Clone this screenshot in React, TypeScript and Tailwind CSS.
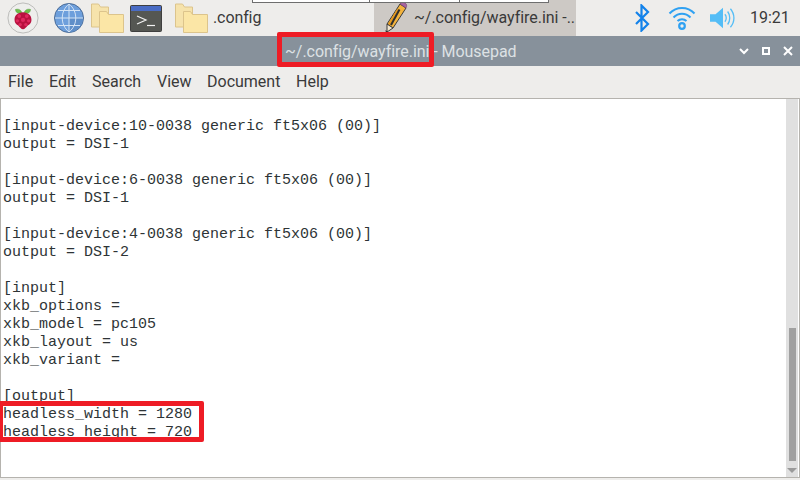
const lines = [
  "",
  "[input-device:10-0038 generic ft5x06 (00)]",
  "output = DSI-1",
  "",
  "[input-device:6-0038 generic ft5x06 (00)]",
  "output = DSI-1",
  "",
  "[input-device:4-0038 generic ft5x06 (00)]",
  "output = DSI-2",
  "",
  "[input]",
  "xkb_options =",
  "xkb_model = pc105",
  "xkb_layout = us",
  "xkb_variant =",
  "",
  "[output]",
  "headless_width = 1280",
  "headless_height = 720",
];

const menus = [
  { label: "File", width: "w-[41px]" },
  { label: "Edit", width: "w-[43px]" },
  { label: "Search", width: "w-[65px]" },
  { label: "View", width: "w-[50px]" },
  { label: "Document", width: "w-[89px]" },
  { label: "Help", width: "w-[40px]" },
];

const RaspberryIcon = () => (
  <svg width="32" height="32" viewBox="0 0 34 34">
    <circle cx="17" cy="17" r="16" fill="#eeeeec" stroke="#b9b9b6" />
    <path d="M16 12c-1-4-4-5-7-4 0 3 3 5 7 4zM18 12c1-4 4-5 7-4 0 3-3 5-7 4z" fill="#6cc04a" stroke="#4c8f33" strokeWidth="0.5" />
    <path d="M17 11c5 0 9 3 9 8 0 3-2 5-4 6-2 2-3 4-5 4s-3-2-5-4c-2-1-4-3-4-6 0-5 4-8 9-8z" fill="#b8123f" />
    <g fill="#e0295f">
      <circle cx="13" cy="15" r="2" />
      <circle cx="21" cy="15" r="2" />
      <circle cx="17" cy="19" r="2.2" />
      <circle cx="11" cy="20" r="1.8" />
      <circle cx="23" cy="20" r="1.8" />
      <circle cx="14" cy="24" r="1.8" />
      <circle cx="20" cy="24" r="1.8" />
    </g>
  </svg>
);

const GlobeIcon = () => (
  <svg width="30" height="30" viewBox="0 0 30 30">
    <circle cx="15" cy="15" r="14.5" fill="#6d9fdc" stroke="#4c6c96" />
    <path d="M15 15h14a14 14 0 0 1-14 14z" fill="#5f8fc9" />
    <path d="M15 1v28M1 15h28M4 7.500h22M4 22.500h22M15 1c-9 7-9 21 0 28M15 1c9 7 9 21 0 28" fill="none" stroke="#d5e4f5" strokeWidth="1" />
  </svg>
);

const FolderIcon = () => (
  <svg width="33" height="30" viewBox="0 0 33 30">
    <path d="M.5 1h7l2 3h8v20H.500z" fill="#f6e3ac" stroke="#dcc48c" />
    <path d="M8.500 8.500h7l2 3h15v18h-24z" fill="#fbe6a6" stroke="#dcc48c" />
  </svg>
);

const TerminalIcon = () => (
  <svg width="32" height="27" viewBox="0 0 32 27">
    <rect x="0.500" y="0.500" width="31" height="26" rx="1" fill="#555753" stroke="#3f3f3f" />
    <rect x="1" y="1" width="30" height="5" fill="#4a6cc4" />
    <path d="M7 11l9 4-9 4" fill="none" stroke="#f2f2f2" strokeWidth="1.200" />
    <path d="M17 20.500h8" stroke="#f2f2f2" strokeWidth="1.200" />
  </svg>
);

const PencilIcon = () => (
  <svg width="24" height="34" viewBox="0 0 24 34">
    <path d="M16 3l6 4L9 27l-6-4z" fill="#f3b33d" stroke="#3a3a3a" strokeWidth="1" />
    <path d="M13 8l-9 15 2 1.500L15.500 9z" fill="#e69a1f" />
    <path d="M15.500 8.500L7 24" stroke="#2e2e2e" strokeWidth="2" />
    <path d="M16 3c1-2 3-2 5-1 2 1 2 3 1 5z" fill="#a9649f" stroke="#6e4169" strokeWidth="0.600" />
    <path d="M3 23l6 4-6 4z" fill="#f3e6cf" stroke="#3a3a3a" strokeWidth="1" />
    <path d="M1.500 29l3 2.500L2 33z" fill="#2e2e2e" />
  </svg>
);

const BluetoothIcon = () => (
  <svg width="16" height="28" viewBox="0 0 16 28">
    <path d="M2 8l12 12-6.500 6.500V1.500L14 8 2 20" fill="none" stroke="#1282ea" strokeWidth="2.200" />
  </svg>
);

const WifiIcon = () => (
  <svg width="28" height="26" viewBox="0 0 28 26">
    <g fill="none" stroke="#2fa1f2" strokeWidth="2">
      <path d="M1.500 8.500c7-7.500 18-7.500 25 0" />
      <path d="M5.500 12.500c5-5 12-5 17 0" />
      <path d="M9.500 16c2.500-2.500 6.500-2.500 9 0" />
      <circle cx="14" cy="21" r="2.800" strokeWidth="2.200" />
    </g>
  </svg>
);

const VolumeIcon = () => (
  <svg width="26" height="24" viewBox="0 0 28 24">
    <path d="M0 8h6l8-7v22l-8-7H0z" fill="#54bdf6" />
    <g fill="none" stroke="#54bdf6" strokeWidth="1.400">
      <path d="M16 8c2 2 2 6 0 8" />
      <path d="M19 5c3 4 3 10 0 14" />
      <path d="M22 2c5 6 5 14 0 20" />
    </g>
  </svg>
);

const WindowControls = () => (
  <div className="flex items-center gap-[10px] pr-[6px]">
    <svg width="12" height="12" viewBox="0 0 12 12">
      <path d="M2 4l4 4 4-4" fill="none" stroke="#fff" strokeWidth="2" />
    </svg>
    <svg width="12" height="12" viewBox="0 0 12 12">
      <rect x="3" y="3" width="6" height="6" fill="none" stroke="#fff" strokeWidth="2" />
    </svg>
    <svg width="12" height="12" viewBox="0 0 12 12">
      <path d="M2 2l8 8M10 2l-8 8" fill="none" stroke="#fff" strokeWidth="2" />
    </svg>
  </div>
);

export default function App() {
  return (
    <div className="relative flex h-[480px] w-[800px] flex-col overflow-hidden bg-[#eeedeb] font-['Roboto',sans-serif] text-[#3a3a3a]">
      {/* top panel */}
      <div className="flex h-[36px] items-center">
        <div className="ml-[7px] flex items-center">
          <RaspberryIcon />
        </div>
        <div className="ml-[15px]">
          <GlobeIcon />
        </div>
        <div className="ml-[7px]">
          <FolderIcon />
        </div>
        <div className="ml-[6px]">
          <TerminalIcon />
        </div>
        <div className="ml-[13px] flex w-[199px] items-center gap-[5px]">
          <FolderIcon />
          <span className="text-[16px] tracking-[-0.1px]">.config</span>
        </div>
        <div className="flex h-[36px] w-[202px] items-center gap-[6px] overflow-hidden bg-[#cdc9c5] pl-[10px]">
          <PencilIcon />
          <span className="whitespace-nowrap text-[16px] tracking-[-0.05px]">~/.config/wayfire.ini -..</span>
        </div>
        <div className="ml-[58px]">
          <BluetoothIcon />
        </div>
        <div className="ml-[18px]">
          <WifiIcon />
        </div>
        <div className="ml-[14px]">
          <VolumeIcon />
        </div>
        <span className="ml-[14px] text-[16px]">19:21</span>
      </div>

      {/* title bar */}
      <div className="relative flex h-[30px] shrink-0 items-center justify-end bg-[#87919b]">
        <span className="absolute left-[285px] top-[4px] whitespace-nowrap text-[16px] tracking-[-0.05px] text-[#dde1e4]">
          ~/.config/wayfire.ini - Mousepad
        </span>
        <WindowControls />
      </div>

      {/* menu bar */}
      <div className="flex h-[32px] shrink-0 items-center pl-[8px] text-[16px]">
        {menus.map((item) => (
          <span key={item.label} className={item.width}>
            {item.label}
          </span>
        ))}
      </div>

      {/* editor */}
      <div className="flex min-h-0 flex-1 border-y border-x border-[#b5b3ae] bg-white">
        <pre className="flex-1 pl-[2px] pt-[1px] font-['Liberation_Mono',monospace] text-[15px] leading-[18px] text-[#2e3436]">
          {lines.join("\n")}
        </pre>
        <div className="relative mr-[1px] w-[12px] bg-[#e0e0e0]">
          <div className="absolute left-[3px] top-[229px] h-[133px] w-[7px] bg-[#a0a0a0]" />
          <div className="absolute bottom-[4px] left-[1px] h-0 w-0 border-x-[5px] border-t-[5px] border-x-transparent border-t-[#9a9a9a]" />
        </div>
      </div>
      <div className="h-[2px] shrink-0" />

      {/* window edge behind the panel */}
      <div className="absolute left-[252px] top-0 h-[3px] w-[297px] border-x border-b border-[#6e6e6e] bg-white" />
      <div className="absolute left-[369px] top-0 h-[3px] w-px bg-[#6e6e6e]" />
      <div className="absolute left-[459px] top-0 h-[3px] w-px bg-[#6e6e6e]" />

      {/* red marks */}
      <div className="absolute left-[277px] top-[32px] h-[35px] w-[157px] rounded-[2px] border-[5px] border-[#ee1c25]" />
      <div className="absolute left-[-2px] top-[401px] h-[41px] w-[206px] rounded-[2px] border-[5px] border-[#ee1c25]" />
    </div>
  );
}
